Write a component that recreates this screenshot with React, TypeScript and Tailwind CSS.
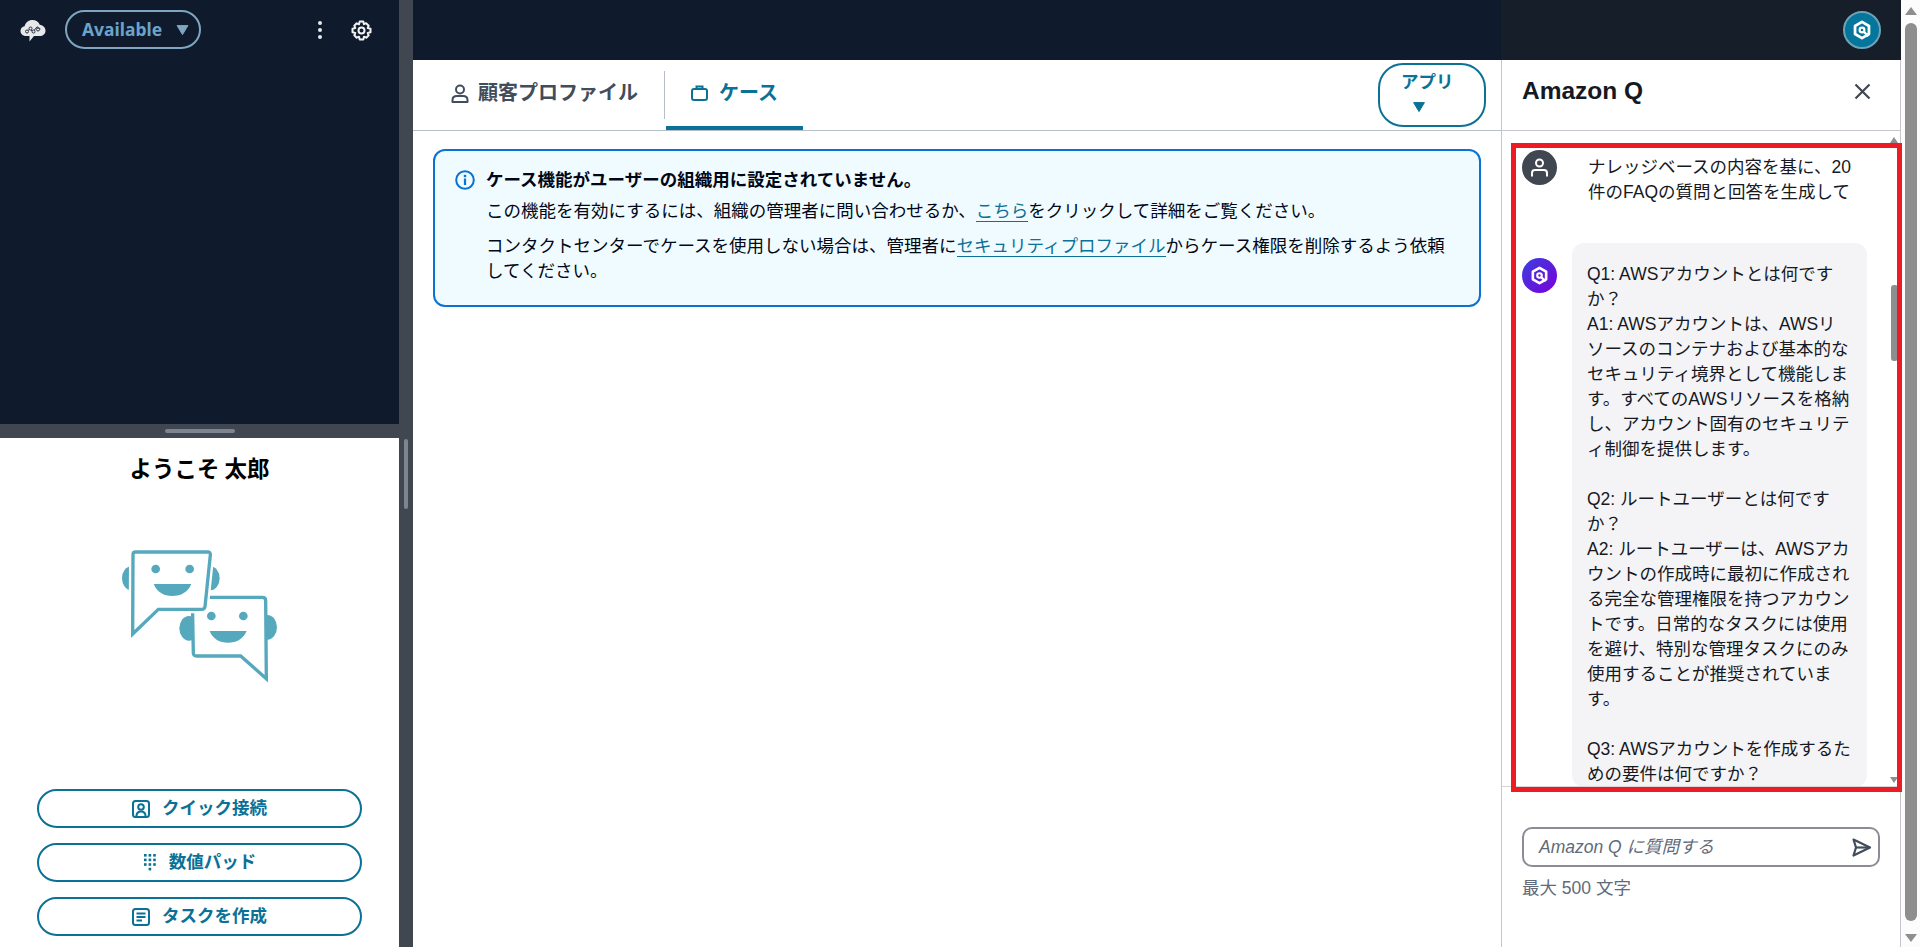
import React from "react";

const QLogo = ({ size }: { size: number }) => (
  <svg width={size} height={size} viewBox="0 0 24 24" fill="none">
    <path d="M12 3.2 19.6 7.6V16.4L12 20.8 4.4 16.4V7.6Z" stroke="#fff" strokeWidth="3" strokeLinejoin="round" />
    <circle cx="12" cy="12" r="2.6" stroke="#fff" strokeWidth="2.4" />
    <path d="M13.5 13.5 19 18.6" stroke="#fff" strokeWidth="2.6" />
  </svg>
);

const Caret = ({ w, h, color }: { w: number; h: number; color: string }) => (
  <svg width={w} height={h} viewBox="0 0 12 10" className="shrink-0">
    <path d="M0.6 0.6H11.4L6 9.6Z" fill={color} stroke={color} strokeLinejoin="round" strokeWidth="1" />
  </svg>
);

const Bubbles = () => (
  <svg width={155} height={135} viewBox="369 420 465 405">
    <g fill="#56a8bd">
      <ellipse cx="570" cy="655" rx="29" ry="37" />
      <ellipse cx="805" cy="652" rx="29" ry="37" />
    </g>
    <path d="M580 562H790Q800 562 800 572L802 806 725 738H592Q584 738 583 730Z" fill="#fff" stroke="#56a8bd" strokeWidth="10" />
    <circle cx="637" cy="618" r="13" fill="#56a8bd" />
    <circle cx="733" cy="618" r="13" fill="#56a8bd" />
    <path d="M632 663H743C732 688 712 698 687 698S642 688 632 663Z" fill="#56a8bd" />
    <g fill="#56a8bd">
      <ellipse cx="397" cy="505" rx="28" ry="36" />
      <ellipse cx="634" cy="505" rx="28" ry="36" />
    </g>
    <path d="M402 434Q402 426 410 426H626Q635 426 634 435L618 590Q617 598 608 598H478L401 672Z" fill="#fff" stroke="#fff" strokeWidth="24" />
    <path d="M402 434Q402 426 410 426H626Q635 426 634 435L618 590Q617 598 608 598H478L401 672Z" fill="#fff" stroke="#56a8bd" strokeWidth="10" />
    <circle cx="470" cy="477" r="13" fill="#56a8bd" />
    <circle cx="572" cy="477" r="13" fill="#56a8bd" />
    <path d="M464 522H577C566 547 546 558 520 558S475 547 464 522Z" fill="#56a8bd" />
  </svg>
);

const CloudIcon = () => (
  <svg width={26} height={23} viewBox="0 0 26 23">
    <path d="M6 17C2.8 17 .5 14.800 .5 12 .5 9.500 2.200 7.700 4.600 7.300 5.300 3.700 8.500 1 12.500 1 15.800 1 18.600 2.900 19.800 5.700 23 6 25.500 8.600 25.500 11.700 25.500 14.800 23 17 19.800 17H14L9.500 22.500V17Z" fill="#e6e8ea" />
    <path d="M6 13 10 10 13 12.800 17 7.800 20.500 10" fill="none" stroke="#2a3442" strokeWidth="1" />
    <g fill="#e6e8ea" stroke="#2a3442" strokeWidth="1">
      <circle cx="7" cy="12.500" r="1.500" />
      <circle cx="10.500" cy="9.500" r="1.500" />
      <circle cx="13.500" cy="12.500" r="1.500" />
      <circle cx="18" cy="10.500" r="1.500" />
    </g>
  </svg>
);

const Gear = () => (
  <svg width={21} height={21} viewBox="0 0 21 21" fill="none" stroke="#f2f3f3" strokeWidth="2">
    <circle cx="10.500" cy="10.500" r="3" />
    <path d="M8.700 1.500H12.300L12.900 4.200 15.100 3.200 17.700 5.700 16.700 8 19.500 8.700V12.300L16.700 13 17.700 15.300 15.300 17.700 13 16.700 12.300 19.500H8.700L8 16.700 5.700 17.700 3.300 15.300 4.300 13 1.500 12.300V8.700L4.300 8 3.300 5.700 5.700 3.300 8 4.300Z" strokeLinejoin="round" />
  </svg>
);

const ContactIcon = () => (
  <svg width={18} height={18} viewBox="0 0 18 18" fill="none" stroke="#0b7196" strokeWidth="2">
    <rect x="1" y="1" width="16" height="16" rx="2.500" />
    <circle cx="9" cy="7" r="2.800" />
    <path d="M4.500 16C4.500 12.800 6.500 11.500 9 11.500S13.500 12.800 13.500 16" />
  </svg>
);

const DialIcon = () => (
  <svg width={14} height={18} viewBox="0 0 14 18" fill="#0b7196">
    {[0, 4.6, 9.2].flatMap((y) =>
      [0, 4.600, 9.200].map((x) => <rect key={`${x}-${y}`} x={x + 1} y={y} width="2.600" height="2.600" />),
    )}
    <rect x="5.600" y="13.800" width="2.600" height="2.600" />
  </svg>
);

const TaskIcon = () => (
  <svg width={18} height={18} viewBox="0 0 18 18" fill="none" stroke="#0b7196" strokeWidth="2">
    <rect x="1" y="1" width="16" height="16" rx="2.500" />
    <path d="M4.500 5.500H13.500M4.500 9H13.500M4.500 12.500H10" />
  </svg>
);

const LeftButton = ({ icon, label, gap }: { icon: React.ReactNode; label: string; gap: string }) => (
  <button className={`flex h-[39px] w-full items-center justify-center rounded-full border-2 border-[#0b7196] bg-white text-[17.5px] font-bold text-[#0b7196] ${gap}`}>
    {icon}
    <span>{label}</span>
  </button>
);

const BubbleLines = [
  "Q1: AWSアカウントとは何です",
  "か？",
  "A1: AWSアカウントは、AWSリ",
  "ソースのコンテナおよび基本的な",
  "セキュリティ境界として機能しま",
  "す。すべてのAWSリソースを格納",
  "し、アカウント固有のセキュリテ",
  "ィ制御を提供します。",
  "",
  "Q2: ルートユーザーとは何です",
  "か？",
  "A2: ルートユーザーは、AWSアカ",
  "ウントの作成時に最初に作成され",
  "る完全な管理権限を持つアカウン",
  "トです。日常的なタスクには使用",
  "を避け、特別な管理タスクにのみ",
  "使用することが推奨されていま",
  "す。",
  "",
  "Q3: AWSアカウントを作成するた",
  "めの要件は何ですか？",
];

export default function App() {
  return (
    <div className="relative flex h-[947px] w-[1920px] overflow-hidden bg-white font-['Liberation_Sans','Noto_Sans_CJK_JP',sans-serif] text-[17.5px] leading-[25px] text-[#000716]">
      <div className="flex min-w-0 flex-1">
        {/* softphone column */}
        <aside className="flex w-[399px] shrink-0 flex-col">
          <div className="flex h-[424px] items-start bg-[#0f1b2d] pl-5 pt-[10px]">
            <div className="mt-[9px]"><CloudIcon /></div>
            <button className="ml-[19px] flex h-[39px] w-[136px] items-center rounded-full border-2 border-[#7fa6c1] pl-[15px] font-['Noto_Sans','Noto_Sans_CJK_JP',sans-serif] text-[17.5px] font-bold text-[#6ba3cb]">
              <span>Available</span>
              <span className="ml-[14px]"><Caret w={13} h={10} color="#7fa6c1" /></span>
            </button>
            <div className="ml-[116px] mt-[11px] flex h-[18px] w-[6px] flex-col items-center justify-between">
              <span className="size-[4px] rounded-full bg-[#e6e8ea]" />
              <span className="size-[4px] rounded-full bg-[#e6e8ea]" />
              <span className="size-[4px] rounded-full bg-[#e6e8ea]" />
            </div>
            <div className="ml-[28px] mt-[10px]"><Gear /></div>
          </div>
          <div className="flex h-[14px] items-center justify-center bg-[#414750]">
            <span className="h-[4px] w-[70px] rounded-full bg-[#7d8590]" />
          </div>
          <div className="flex flex-1 flex-col items-center bg-white">
            <h2 className="mt-[15px] text-center font-['Noto_Sans_CJK_JP',sans-serif] text-[22.5px] font-bold leading-[29px] text-black">ようこそ 太郎</h2>
            <div className="mt-[68px]"><Bubbles /></div>
            <div className="mt-auto mb-[11px] flex w-[325px] flex-col gap-[15px]">
              <LeftButton icon={<ContactIcon />} label="クイック接続" gap="gap-3" />
              <LeftButton icon={<DialIcon />} label="数値パッド" gap="gap-3" />
              <LeftButton icon={<TaskIcon />} label="タスクを作成" gap="gap-3" />
            </div>
          </div>
        </aside>
        {/* separator with scrollbar thumb */}
        <div className="flex w-[14px] shrink-0 justify-center bg-[#414750] pt-[439px]">
          <span className="h-[70px] w-[4px] rounded-full bg-[#7d8590]" />
        </div>
        {/* main */}
        <div className="flex min-w-0 flex-1 flex-col">
          <div className="flex h-[60px] shrink-0 bg-[#0f1b2d]">
            <div className="flex-1" />
            <div className="flex w-[400px] items-center justify-end bg-[#161e2a] pr-[20px]">
              <div className="flex size-[38px] items-center justify-center rounded-full border-2 border-[#6da3b8] bg-[#04769c]">
                <QLogo size={22} />
              </div>
            </div>
          </div>
          <div className="flex min-h-0 flex-1">
            <main className="flex min-w-0 flex-1 flex-col">
              <div className="flex h-[71px] shrink-0 border-b border-[#b6bec9]">
                <div className="flex h-[70px] items-center gap-[9px] pb-[4px] pl-[38px] pr-[26px] text-[20px] font-bold text-[#414d5c]">
                  <svg width={18} height={19} viewBox="0 0 18 19" fill="none" stroke="#414d5c" strokeWidth="2">
                    <circle cx="9" cy="5.500" r="4" />
                    <path d="M1.500 18V16C1.500 13.500 3.500 12 6 12H12C14.500 12 16.500 13.500 16.500 16V18Z" strokeLinejoin="round" />
                  </svg>
                  <span>顧客プロファイル</span>
                </div>
                <div className="mt-[11px] h-[48px] w-px bg-[#b6bec9]" />
                <div className="ml-px flex h-[70px] w-[137px] items-center justify-center gap-[11px] rounded-t-[2px] border-b-4 border-[#0b7196] text-[20px] font-bold text-[#0b7196]">
                  <svg width={17} height={16} viewBox="0 0 17 16" fill="none" stroke="#0b7196" strokeWidth="2">
                    <rect x="1" y="4" width="15" height="11" rx="2" />
                    <path d="M5.500 4V1.500H11.500V4" />
                  </svg>
                  <span>ケース</span>
                </div>
                <div className="ml-auto mr-[15px] mt-[3px] flex h-[64px] w-[108px] flex-col items-start rounded-[25px] border-2 border-[#0b7196] pl-[21px] pt-[5px] text-[17.5px] font-bold leading-[25px] text-[#0b7196]">
                  <span>アプリ</span>
                  <span className="ml-[12px] mt-[7px]"><Caret w={12} h={10} color="#0b7196" /></span>
                </div>
              </div>
              <div className="px-5 pt-[18px]">
                <div className="flex h-[158px] gap-[11px] rounded-[12px] border-2 border-[#0972d3] bg-[#f0fbff] pl-[20px] pr-[30px] pt-[17px]">
                  <svg width={20} height={20} viewBox="0 0 20 20" fill="none" className="mt-[2px] shrink-0">
                    <circle cx="10" cy="10" r="8.800" stroke="#0972d3" strokeWidth="2" />
                    <path d="M10 8.500V15" stroke="#0972d3" strokeWidth="2.200" />
                    <rect x="8.800" y="4.800" width="2.400" height="2.400" fill="#0972d3" />
                  </svg>
                  <div>
                    <p className="font-bold">ケース機能がユーザーの組織用に設定されていません。</p>
                    <p className="mt-[6px]">この機能を有効にするには、組織の管理者に問い合わせるか、<a className="border-b border-[#0b7196] text-[#0b7196]">こちら</a>をクリックして詳細をご覧ください。</p>
                    <p className="mt-[10px]">コンタクトセンターでケースを使用しない場合は、管理者に<a className="border-b border-[#0b7196] text-[#0b7196]">セキュリティプロファイル</a>からケース権限を削除するよう依頼してください。</p>
                  </div>
                </div>
              </div>
            </main>
            {/* Amazon Q */}
            <section className="flex w-[400px] shrink-0 flex-col border-x border-[#c6c6cd]">
              <div className="flex h-[71px] shrink-0 items-center justify-between border-b border-[#c6c6cd] pb-[8px] pl-[20px] pr-[29px]">
                <h1 className="text-[24.5px] font-bold leading-[30px] text-[#16191f]">Amazon Q</h1>
                <svg width={17} height={17} viewBox="0 0 17 17" stroke="#414750" strokeWidth="2.200">
                  <path d="M1.500 1.500 15.500 15.500M15.500 1.500 1.500 15.500" />
                </svg>
              </div>
              <div className="relative h-[656px] shrink-0 overflow-hidden border-b border-[#d5d5da]">
                <div className="flex items-start pl-[20px] pt-[19px]">
                  <div className="flex size-[35px] shrink-0 items-center justify-center rounded-full bg-[#414750]">
                    <svg width={19} height={21} viewBox="0 0 19 21" fill="none" stroke="#fff" strokeWidth="2">
                      <circle cx="9.500" cy="6" r="3.500" />
                      <path d="M2 19.500V16C2 14 3.500 13 5 13H14C15.500 13 17 14 17 16V19.500" />
                    </svg>
                  </div>
                  <p className="ml-[31px] w-[270px] pt-[5px] text-[#16191f]">ナレッジベースの内容を基に、20件のFAQの質問と回答を生成して</p>
                </div>
                <div className="mt-[38px] flex items-start pl-[20px]">
                  <div className="mt-[15px] flex size-[35px] shrink-0 items-center justify-center rounded-full bg-[linear-gradient(135deg,#3b3fe0,#7a00d8)]">
                    <QLogo size={21} />
                  </div>
                  <div className="ml-[15px] w-[295px] rounded-[12px] bg-[#f4f4f7] px-[15px] pt-[19px] text-[#16191f]">
                    {BubbleLines.map((l, i) => (
                      <div key={i} className="h-[25px] whitespace-nowrap">{l}</div>
                    ))}
                  </div>
                </div>
                <div className="absolute inset-y-0 right-0 flex w-[12px] flex-col items-center bg-white pt-[6px]">
                  <span className="h-0 w-0 border-x-[4px] border-b-[6px] border-x-transparent border-b-[#8e8e8e]" />
                  <span className="mt-[142px] h-[76px] w-[7px] rounded-[3px] bg-[#8e8e8e]" />
                  <span className="mt-auto mb-[3px] h-0 w-0 border-x-[4px] border-t-[6px] border-x-transparent border-t-[#8e8e8e]" />
                </div>
              </div>
              <div className="px-[20px] pt-[40px]">
                <div className="flex h-[40px] items-center justify-between rounded-[10px] border-2 border-[#8c8c94] pl-[15px] pr-[6px]">
                  <span className="italic text-[#5f6b7a]">Amazon Q に質問する</span>
                  <svg width={20} height={19} viewBox="0 0 20 19" fill="none" stroke="#414d5c" strokeWidth="2.200" strokeLinejoin="round">
                    <path d="M1.500 1.500 18 9.500 1.500 17.500 4 9.500Z" />
                    <path d="M4 9.500H18" />
                  </svg>
                </div>
                <p className="mt-[9px] text-[#5f6b7a]">最大 500 文字</p>
              </div>
            </section>
          </div>
        </div>
      </div>
      {/* page scrollbar */}
      <div className="flex w-[19px] shrink-0 flex-col items-center bg-[#fcfcfc] pt-[7px]">
        <span className="h-0 w-0 border-x-[6px] border-b-[8px] border-x-transparent border-b-[#8e8e8e]" />
        <span className="mt-[8px] h-[898px] w-[12px] rounded-full bg-[#8e8e8e]" />
        <span className="mt-auto mb-[5px] h-0 w-0 border-x-[6px] border-t-[8px] border-x-transparent border-t-[#8e8e8e]" />
      </div>
      {/* red annotation frame */}
      <div className="pointer-events-none absolute left-[1511px] top-[143px] h-[649px] w-[391px] border-[5px] border-[#ed1c24]" />
    </div>
  );
}
